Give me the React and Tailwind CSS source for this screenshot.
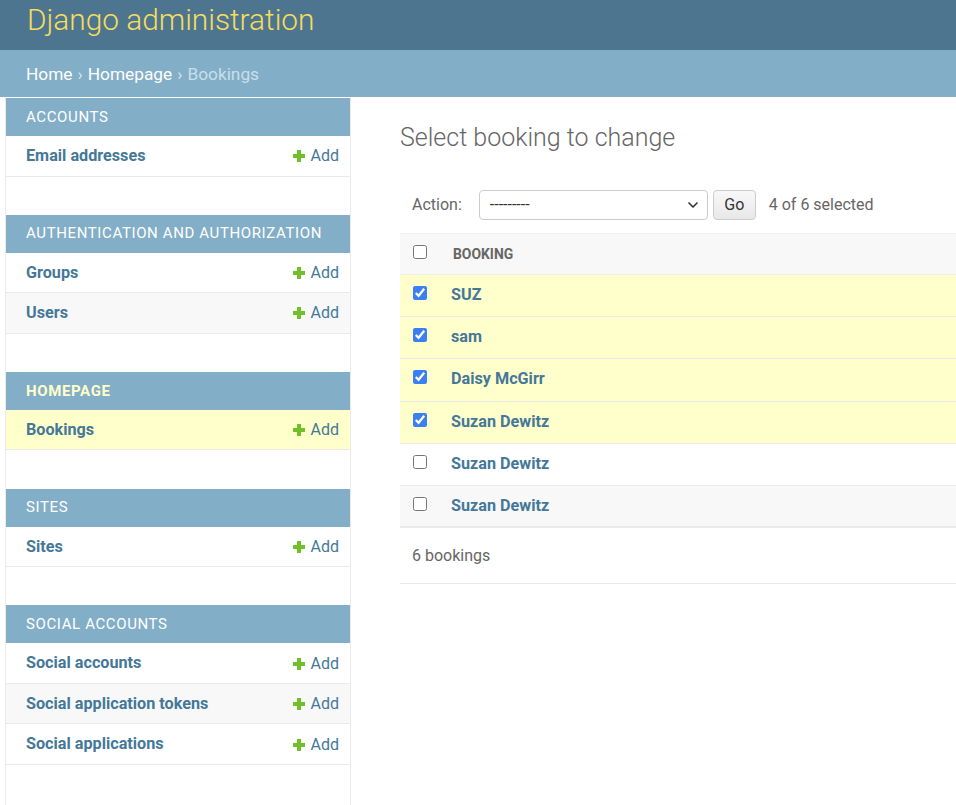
import { ChevronDown } from 'lucide-react'

const modules = [
    { name: 'Accounts', models: ['Email addresses'] },
    { name: 'Authentication and Authorization', models: ['Groups', 'Users'] },
    { name: 'Homepage', models: ['Bookings'], current: true },
    { name: 'Sites', models: ['Sites'] },
    { name: 'Social Accounts', models: ['Social accounts', 'Social application tokens', 'Social applications'] },
]

const bookings = [
    { name: 'SUZ', checked: true },
    { name: 'sam', checked: true },
    { name: 'Daisy McGirr', checked: true },
    { name: 'Suzan Dewitz', checked: true },
    { name: 'Suzan Dewitz', checked: false },
    { name: 'Suzan Dewitz', checked: false },
]

const PlusIcon = () => (
    <svg width="12" height="12" viewBox="0 0 12 12" className="shrink-0">
        <path d="M4 0h4v4h4v4H8v4H4V8H0V4h4z" fill="#70bf2b" />
    </svg>
)

const Checkbox = ({ checked }) => (
    <input
        type="checkbox"
        checked={checked}
        readOnly
        className="w-[14px] h-[14px] m-0 accent-[#3b7ff5]"
    />
)

const App = () => {
    return (
        <div className="min-h-[805px] bg-white text-[#333] overflow-hidden" style={{ fontFamily: 'Roboto, "Liberation Sans", sans-serif' }}>
            {/* Header */}
            <div className="h-[50px] bg-[#4e7590] flex items-center px-[27px] pb-[10px]">
                <span className="text-[29.8px] font-light text-[#f5dd5d] leading-none">Django administration</span>
            </div>

            {/* Breadcrumbs */}
            <div className="h-[47px] bg-[#83aec7] flex items-center px-[26px] pt-[2px] text-[17.3px] text-white">
                <span>Home</span>
                <span className="mx-[5px] text-[#d8e8f0]">›</span>
                <span>Homepage</span>
                <span className="mx-[5px] text-[#d8e8f0]">›</span>
                <span className="text-[#c8dfea]">Bookings</span>
            </div>

            <div className="flex min-h-[708px]">
                <div className="w-[6px] shrink-0 border-r border-[#eaeaea]" />

                {/* Sidebar */}
                <nav className="w-[345px] shrink-0 border-r border-[#eaeaea] pt-[1px]">
                    {modules.map((mod) => (
                        <div key={mod.name} className="mb-[38.2px]">
                            <div
                                className={
                                    'h-[38px] bg-[#83aec7] flex items-center pl-[20px] text-[15px] uppercase tracking-[0.62px] ' +
                                    (mod.current ? 'text-[#ffffcc] font-bold' : 'text-white')
                                }
                            >
                                {mod.name}
                            </div>
                            {mod.models.map((model, i) => (
                                <div
                                    key={model}
                                    className={
                                        'h-[40.5px] border-b border-[#eaeaea] flex items-center justify-between pl-[20px] pr-[11px] pt-[1px] ' +
                                        (mod.current ? 'bg-[#ffffcc]' : i % 2 === 1 ? 'bg-[#f8f8f8]' : 'bg-white')
                                    }
                                >
                                    <span className="text-[16.2px] font-bold text-[#457898]">{model}</span>
                                    <span className="flex items-center gap-[6px] text-[16px] text-[#457898]">
                                        <PlusIcon />
                                        Add
                                    </span>
                                </div>
                            ))}
                        </div>
                    ))}
                </nav>

                {/* Main content */}
                <main className="flex-1 min-w-0 pl-[49px] pt-[26px]">
                    <h1 className="text-[25px] leading-[30px] font-light text-[#666] mb-[27px]">Select booking to change</h1>

                    <div className="flex items-center py-[10px] pl-[12px] text-[16px] text-[#666]">
                        <span>Action:</span>
                        <div className="ml-[17px] w-[229px] h-[30px] border border-[#cccccc] rounded-[4px] flex items-center justify-between pl-[10px] pr-[6px] bg-white">
                            <span className="text-[16px] text-[#333]">---------</span>
                            <ChevronDown className="w-[16px] h-[16px] text-[#333]" strokeWidth={2.5} />
                        </div>
                        <div className="ml-[5px] h-[30px] w-[43px] border border-[#cccccc] rounded-[4px] bg-gradient-to-b from-[#f8f8f8] to-[#e8e8e8] flex items-center justify-center text-[#333] text-[16px]">
                            Go
                        </div>
                        <span className="ml-[13px]">4 of 6 selected</span>
                    </div>

                    <div className="mt-[3px]">
                        <div className="h-[42px] bg-[#f8f8f8] border-t border-b border-[#eeeeee] flex items-center">
                            <div className="w-[45px] pl-[13px] flex items-center mb-[4px]">
                                <Checkbox checked={false} />
                            </div>
                            <span className="pl-[8px] text-[13.9px] font-bold uppercase text-[#666]">Booking</span>
                        </div>
                        {bookings.map((b, i) => (
                            <div
                                key={i}
                                className={
                                    'h-[42.2px] flex items-start pt-[8px] border-b ' +
                                    (i === bookings.length - 1 ? 'border-b-2 border-[#eaeaea] ' : 'border-[#eaeaea] ') +
                                    (b.checked ? 'bg-[#ffffcc]' : i % 2 === 1 ? 'bg-[#f8f8f8]' : 'bg-white')
                                }
                            >
                                <div className="w-[45px] pl-[13px] pt-[3px] flex">
                                    <Checkbox checked={b.checked} />
                                </div>
                                <span className="pl-[6px] text-[16.2px] leading-[24px] font-bold text-[#457898]">{b.name}</span>
                            </div>
                        ))}
                        <div className="h-[56px] border-b border-[#eaeaea] flex items-center pl-[12px] text-[16px] text-[#666]">
                            6 bookings
                        </div>
                    </div>
                </main>
            </div>
        </div>
    )
}

export default App
